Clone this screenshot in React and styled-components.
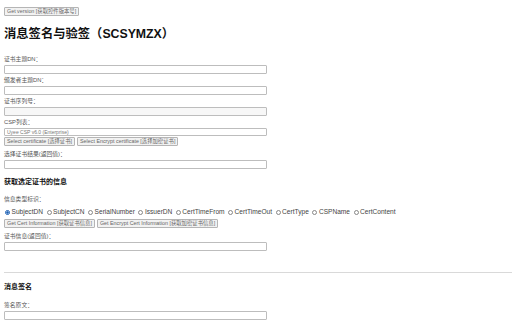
import React, { useState } from "react";
import styled, { createGlobalStyle } from "styled-components";

const GlobalStyle = createGlobalStyle`
  html, body {
    margin: 0;
    padding: 0;
    background: #ffffff;
  }
  body {
    font-family: "Liberation Sans", "Noto Sans CJK SC", sans-serif;
    color: #333;
    overflow: hidden;
  }
`;

const Page = styled.div`
  padding: 7px 4px 0 4px;
  width: 504px;
`;

const ButtonRow = styled.div`
  display: flex;
  align-items: center;
  margin: ${(p) => p.$margin || "0"};
`;

const Button = styled.button`
  display: block;
  box-sizing: border-box;
  height: 9px;
  padding: 0 2px;
  margin: 0 2px 0 0;
  font-family: "Liberation Sans", "Noto Sans CJK SC", sans-serif;
  font-size: 5.35px;
  line-height: 7px;
  color: #666;
  background: #f2f2f2;
  border: 0.5px solid #b5b5b5;
  border-radius: 1px;
  white-space: nowrap;
`;

const Title = styled.h1`
  margin: 10px 0 13px 0;
  font-family: "Liberation Sans", "Noto Sans CJK SC", sans-serif;
  font-size: 12.3px;
  line-height: 16px;
  font-weight: 700;
  color: #111;
`;

const Field = styled.div`
  display: flex;
  flex-direction: column;
  align-items: flex-start;
  margin: ${(p) => p.$margin || "0 0 2px 0"};
`;

const Label = styled.label`
  font-size: 5.8px;
  line-height: 8px;
  color: #555;
  margin-bottom: 2px;
`;

const TextInput = styled.input`
  box-sizing: border-box;
  width: 263px;
  height: 9px;
  margin: 0;
  padding: 0 2px;
  border: 0.5px solid #bdbdbd;
  border-radius: 1px;
  background: ${(p) => (p.readOnly ? "#f7f7f7" : "#fff")};
  font-size: 5px;
`;

const Select = styled.div`
  box-sizing: border-box;
  width: 263px;
  height: 8px;
  padding: 0 2px;
  border: 0.5px solid #bdbdbd;
  border-radius: 1px;
  font-size: 5px;
  line-height: 7px;
  color: #777;
`;

const SectionHeading = styled.h3`
  margin: ${(p) => p.$margin || "8px 0 9px 0"};
  font-size: 7px;
  line-height: 9px;
  font-weight: 700;
  color: #111;
`;

const RadioRow = styled.div`
  display: flex;
  align-items: center;
  margin: 3px 0 3px 0;
`;

const RadioLabel = styled.label`
  display: flex;
  align-items: center;
  font-size: 6.6px;
  line-height: 8px;
  color: #444;
  margin-right: 2.5px;
`;

const Radio = styled.input.attrs({ type: "radio" })`
  appearance: none;
  box-sizing: border-box;
  width: 5px;
  height: 5px;
  margin: 0 1.5px 0 1px;
  border: 0.5px solid #888;
  border-radius: 50%;
  background: #fff;
  &:checked {
    border-color: #1a5fb4;
    background: radial-gradient(circle, #1a5fb4 45%, #fff 55%);
  }
`;

const Divider = styled.hr`
  margin: 21px -8px 0 0;
  border: none;
  border-top: 1px solid #d9d9d9;
`;

const infoTypes = [
  "SubjectDN",
  "SubjectCN",
  "SerialNumber",
  "IssuerDN",
  "CertTimeFrom",
  "CertTimeOut",
  "CertType",
  "CSPName",
  "CertContent",
];

export default function App() {
  const [infoType, setInfoType] = useState("SubjectDN");

  return (
    <>
      <GlobalStyle />
      <Page>
        <ButtonRow>
          <Button>Get version [获取控件版本号]</Button>
        </ButtonRow>
        <Title>消息签名与验签（SCSYMZX）</Title>

        <Field>
          <Label>证书主题DN：</Label>
          <TextInput />
        </Field>
        <Field>
          <Label>颁发者主题DN：</Label>
          <TextInput />
        </Field>
        <Field>
          <Label>证书序列号：</Label>
          <TextInput readOnly />
        </Field>
        <Field $margin="0">
          <Label>CSP列表：</Label>
          <Select>Uyee CSP v6.0 (Enterprise)</Select>
        </Field>
        <ButtonRow $margin="1px 0 4px 0">
          <Button>Select certificate [选择证书]</Button>
          <Button>Select Encrypt certificate [选择加密证书]</Button>
        </ButtonRow>
        <Field>
          <Label>选择证书结果(返回值)：</Label>
          <TextInput />
        </Field>

        <SectionHeading>获取选定证书的信息</SectionHeading>
        <Field $margin="0">
          <Label>信息类型标识：</Label>
        </Field>
        <RadioRow>
          {infoTypes.map((t) => (
            <RadioLabel key={t}>
              <Radio
                name="infoType"
                checked={infoType === t}
                onChange={() => setInfoType(t)}
              />
              {t}
            </RadioLabel>
          ))}
        </RadioRow>
        <ButtonRow $margin="0 0 4px 0">
          <Button>Get Cert Information [获取证书信息]</Button>
          <Button>Get Encrypt Cert Information [获取加密证书信息]</Button>
        </ButtonRow>
        <Field>
          <Label>证书信息(返回值)：</Label>
          <TextInput />
        </Field>

        <Divider />
        <SectionHeading $margin="9px 0 10px 0">消息签名</SectionHeading>
        <Field>
          <Label>签名原文：</Label>
          <TextInput />
        </Field>
      </Page>
    </>
  );
}
